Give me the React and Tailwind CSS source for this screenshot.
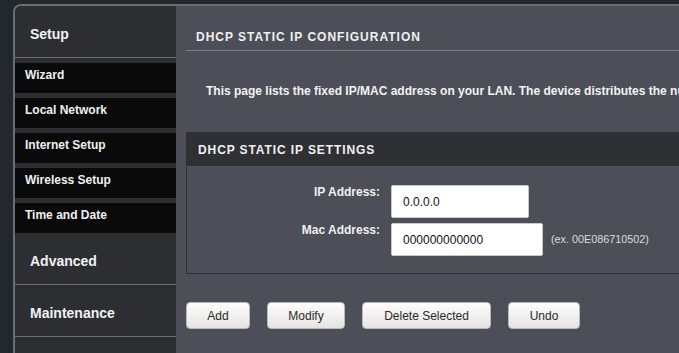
const setupItems = ['Wizard', 'Local Network', 'Internet Setup', 'Wireless Setup', 'Time and Date']
const buttons = [
  { label: 'Add', w: 'w-[64px]' },
  { label: 'Modify', w: 'w-[78px]' },
  { label: 'Delete Selected', w: 'w-[129px]' },
  { label: 'Undo', w: 'w-[72px]' },
]

function SideSection({ title, children }) {
  return (
    <div className="flex h-[52px] items-center border-b border-[#6e6e6e] pl-[15px] pt-[5px] text-[14px] font-bold text-[#f2f2f2]">
      {title}
      {children}
    </div>
  )
}

export default function App() {
  return (
    <div className="h-[353px] w-[679px] overflow-hidden bg-[#23272e] pl-[13px] pt-[4px] font-['Liberation_Sans',Arial,sans-serif]">
      <div className="flex h-[400px] w-[1000px] overflow-hidden rounded-tl-[8px] border-l-2 border-t-2 border-[#6b6d70]">
        {/* Sidebar */}
        <aside className="w-[161px] shrink-0 bg-[#2d2e32]">
          <SideSection title="Setup" />
          <nav className="flex flex-col gap-[5px] pt-[5px]">
            {setupItems.map((item) => (
              <div
                key={item}
                className="h-[30px] bg-[#0a0a0a] pl-[10px] pt-[5px] text-[12px] font-bold leading-[14px] text-[#f0f0f0]"
              >
                {item}
              </div>
            ))}
          </nav>
          <SideSection title="Advanced" />
          <SideSection title="Maintenance" />
        </aside>

        {/* Main panel */}
        <main className="flex-1 bg-[#4c4f57] px-[10px]">
          <div className="mt-[24px] border-b border-[#7c7e83] pb-[5px] pl-[10px] text-[12px] font-bold leading-[15px] tracking-[1px] text-[#f0f0f0]">
            DHCP STATIC IP CONFIGURATION
          </div>
          <p className="mt-[33px] whitespace-nowrap pl-[20px] text-[12px] font-bold leading-[14px] text-[#f2f2f2]">
            This page lists the fixed IP/MAC address on your LAN. The device distributes the number configured to hosts on your network as they need it.
          </p>

          {/* Settings box */}
          <section className="mt-[34px] border border-[#303135]">
            <div className="h-[34px] border-b border-[#55575d] bg-[#2f3034] pl-[11px] pt-[10px] text-[12px] font-bold leading-[14px] tracking-[0.9px] text-[#f0f0f0]">
              DHCP STATIC IP SETTINGS
            </div>
            <div className="flex flex-col gap-[5px] pb-[17px] pt-[18px]">
              <div className="flex items-start gap-[11px]">
                <label className="w-[193px] text-right text-[12px] font-bold leading-[14px] text-[#f0f0f0]">IP Address:</label>
                <input
                  readOnly
                  value="0.0.0.0"
                  className="h-[33px] w-[138px] rounded-[2px] border border-[#c9c9c9] bg-white pl-[11px] text-[12px] text-[#111] outline-none"
                />
              </div>
              <div className="flex items-start gap-[11px]">
                <label className="w-[193px] text-right text-[12px] font-bold leading-[14px] text-[#f0f0f0]">Mac Address:</label>
                <div className="flex items-center gap-[8px]">
                  <input
                    readOnly
                    value="000000000000"
                    className="h-[33px] w-[152px] rounded-[2px] border border-[#c9c9c9] bg-white pl-[11px] text-[12px] text-[#111] outline-none"
                  />
                  <span className="text-[10.8px] text-[#dcdcdc]">(ex. 00E086710502)</span>
                </div>
              </div>
            </div>
          </section>

          {/* Actions */}
          <div className="mt-[28px] flex gap-[17px]">
            {buttons.map((b) => (
              <button
                key={b.label}
                className={`${b.w} h-[27px] rounded-[4px] border border-[#b9b9b9] bg-gradient-to-b from-[#fdfdfc] to-[#e6e4e1] text-[12px] text-[#2a2a2a]`}
              >
                {b.label}
              </button>
            ))}
          </div>
        </main>
      </div>
    </div>
  )
}
